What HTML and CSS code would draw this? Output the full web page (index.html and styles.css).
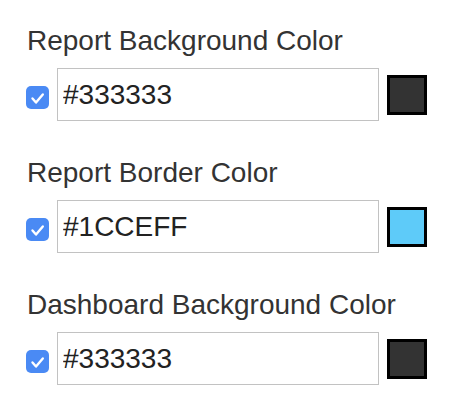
FILE: index.html
```html
<!DOCTYPE html>
<html>
<head>
<meta charset="utf-8">
<link rel="stylesheet" href="styles.css">
</head>
<body>
<div class="form">
  <div class="group">
    <div class="label">Report Background Color</div>
    <div class="row">
      <span class="check"><svg viewBox="0 0 23 23" width="23" height="23"><path d="M6.5 12.5 L10 16.5 L16.8 8.5" fill="none" stroke="#fff" stroke-width="2.4" stroke-linecap="round" stroke-linejoin="round"/></svg></span>
      <input class="field" type="text" value="#333333">
      <span class="swatch" style="background:#333333"></span>
    </div>
  </div>
  <div class="group">
    <div class="label">Report Border Color</div>
    <div class="row">
      <span class="check"><svg viewBox="0 0 23 23" width="23" height="23"><path d="M6.5 12.5 L10 16.5 L16.8 8.5" fill="none" stroke="#fff" stroke-width="2.4" stroke-linecap="round" stroke-linejoin="round"/></svg></span>
      <input class="field" type="text" value="#1CCEFF">
      <span class="swatch" style="background:#5ecbf9"></span>
    </div>
  </div>
  <div class="group">
    <div class="label">Dashboard Background Color</div>
    <div class="row">
      <span class="check"><svg viewBox="0 0 23 23" width="23" height="23"><path d="M6.5 12.5 L10 16.5 L16.8 8.5" fill="none" stroke="#fff" stroke-width="2.4" stroke-linecap="round" stroke-linejoin="round"/></svg></span>
      <input class="field" type="text" value="#333333">
      <span class="swatch" style="background:#333333"></span>
    </div>
  </div>
</div>
</body>
</html>
```
FILE: styles.css
```css
html, body {
  margin: 0;
  padding: 0;
  background: #ffffff;
}
body {
  font-family: "Liberation Sans", Arial, sans-serif;
}
.form {
  display: flex;
  flex-direction: column;
  gap: 35px;
  padding: 24px 0 0 26px;
}
.group {
  display: flex;
  flex-direction: column;
  gap: 10px;
}
.label {
  font-size: 28px;
  line-height: 34px;
  color: #333333;
  padding-left: 1px;
}
.row {
  display: flex;
  align-items: flex-start;
  gap: 8px;
}
.check {
  width: 23px;
  height: 23px;
  margin-top: 18px;
  border-radius: 5px;
  background: #4a8af4;
  display: block;
}
.check svg {
  display: block;
}
.field {
  box-sizing: border-box;
  width: 322px;
  height: 53px;
  margin: 0;
  border: 1px solid #c2c2c2;
  border-radius: 0;
  padding: 0 5px;
  font-family: "Liberation Sans", Arial, sans-serif;
  font-size: 28px;
  color: #222222;
  background: #fff;
  outline: none;
}
.swatch {
  box-sizing: border-box;
  display: block;
  width: 40px;
  height: 40px;
  margin-top: 7px;
  border: 3px solid #000;
}
```
